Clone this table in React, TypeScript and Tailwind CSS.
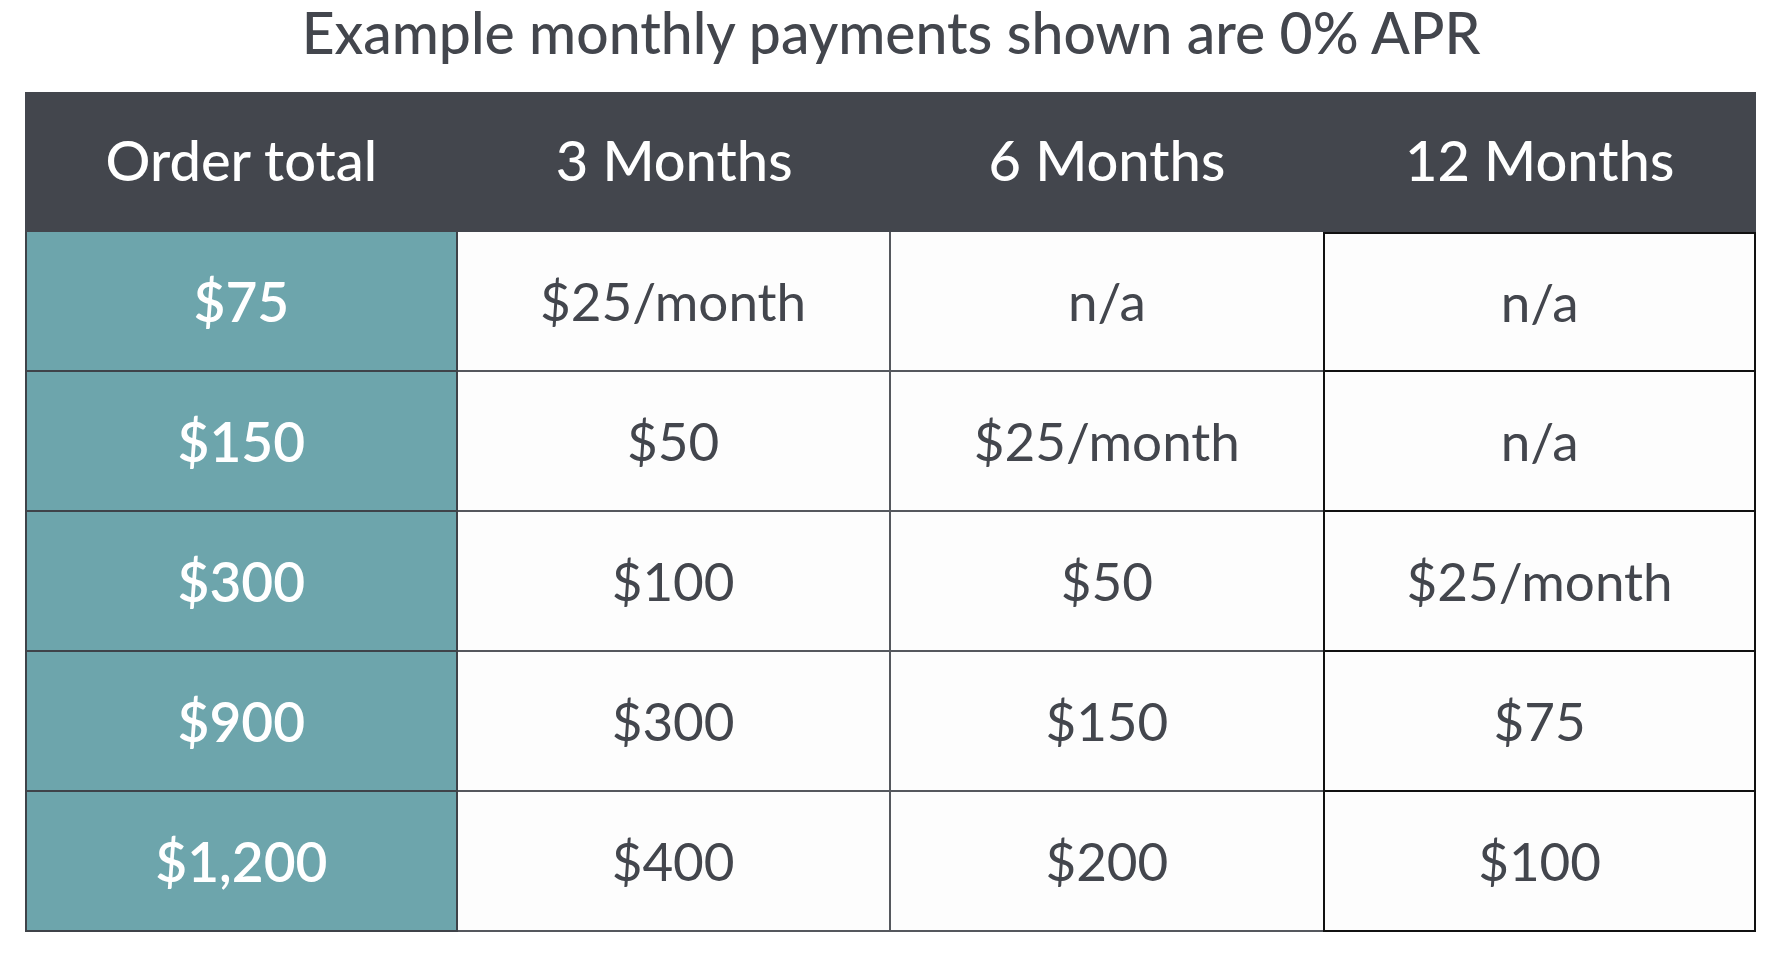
import React from "react";

const rows = [
  ["$75", "$25/month", "n/a", "n/a"],
  ["$150", "$50", "$25/month", "n/a"],
  ["$300", "$100", "$50", "$25/month"],
  ["$900", "$300", "$150", "$75"],
  ["$1,200", "$400", "$200", "$100"],
];

export default function App() {
  return (
    <div
      className="w-[1782px] h-[962px] bg-white text-[#43464d]"
      style={{ fontFamily: "Lato, 'Noto Sans', sans-serif" }}
    >
      <div className="h-[92px] flex items-start justify-center">
        <div className="text-[57px] leading-[64px] font-medium">Example monthly payments shown are 0% APR</div>
      </div>
      <div className="ml-[25px] w-[1731px]">
        <div className="grid grid-cols-4 h-[140px] bg-[#43464d] text-white text-[56px] font-medium">
          {["Order total", "3 Months", "6 Months", "12 Months"].map((h) => (
            <div key={h} className="flex items-center justify-center pb-[4px]">
              {h}
            </div>
          ))}
        </div>
        {rows.map((r, i) => (
          <div key={i} className="grid grid-cols-4 h-[140px] text-[53px]">
            <div className="flex items-center justify-center bg-[#6da5ac] text-white font-semibold text-[55px] border-l-2 border-b-2 border-r-2 border-[#3f4349]">
              {r[0]}
            </div>
            <div className="flex items-center justify-center bg-[#fdfdfd] border-b-2 border-r-2 border-[#55585e]">
              {r[1]}
            </div>
            <div className="flex items-center justify-center bg-[#fdfdfd] border-b-2 border-[#55585e]">
              {r[2]}
            </div>
            <div
              className={
                "flex items-center justify-center bg-[#fdfdfd] border-l-2 border-r-2 border-b-2 border-[#111111] " +
                (i === 0 ? "border-t-2" : "")
              }
            >
              {r[3]}
            </div>
          </div>
        ))}
      </div>
    </div>
  );
}
